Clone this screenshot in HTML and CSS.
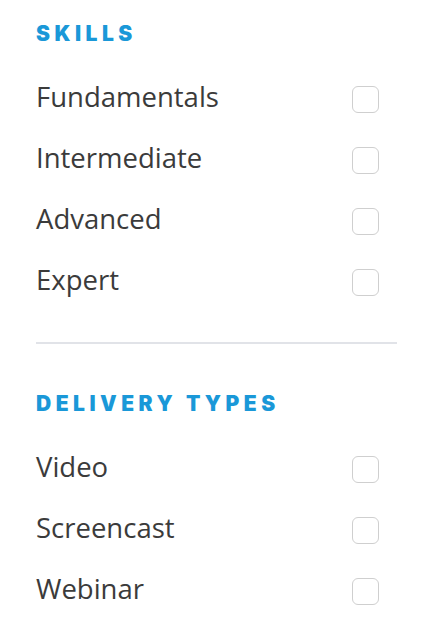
FILE: index.html
```html
<!DOCTYPE html>
<html>
<head>
<meta charset="utf-8">
<link rel="stylesheet" href="styles.css">
</head>
<body>
<div class="panel">
  <section class="group">
    <h2 class="heading">SKILLS</h2>
    <label class="row"><span class="label">Fundamentals</span><input type="checkbox" class="box"></label>
    <label class="row"><span class="label">Intermediate</span><input type="checkbox" class="box"></label>
    <label class="row"><span class="label">Advanced</span><input type="checkbox" class="box"></label>
    <label class="row"><span class="label">Expert</span><input type="checkbox" class="box"></label>
  </section>
  <hr class="divider">
  <section class="group">
    <h2 class="heading heading-second">DELIVERY TYPES</h2>
    <label class="row"><span class="label">Video</span><input type="checkbox" class="box"></label>
    <label class="row"><span class="label">Screencast</span><input type="checkbox" class="box"></label>
    <label class="row"><span class="label">Webinar</span><input type="checkbox" class="box"></label>
  </section>
</div>
</body>
</html>
```
FILE: styles.css
```css
html, body {
  margin: 0;
  padding: 0;
  background: #fff;
}
.panel {
  padding: 0 34px 0 36px;
}
.group {
  display: flex;
  flex-direction: column;
}
.heading {
  margin: 22px 0 20px;
  font-family: "Inter", "Lato", sans-serif;
  font-weight: 900;
  font-size: 21px;
  line-height: 24px;
  letter-spacing: 4.5px;
  color: #1a98d8;
}
.heading-second {
  margin-top: 48px;
}
.row {
  display: flex;
  align-items: center;
  justify-content: space-between;
  height: 61px;
}
.label {
  font-family: "Open Sans", sans-serif;
  font-size: 27.5px;
  color: #3b3b3b;
}
.box {
  appearance: none;
  -webkit-appearance: none;
  margin: 6px 18px 0 0;
  width: 27px;
  height: 27px;
  border: 1.5px solid #cfcfcf;
  border-radius: 6px;
  background: #fff;
  box-sizing: border-box;
}
.divider {
  margin: 32px 0 0;
  border: 0;
  height: 2px;
  background: #e1e3e8;
}
```
